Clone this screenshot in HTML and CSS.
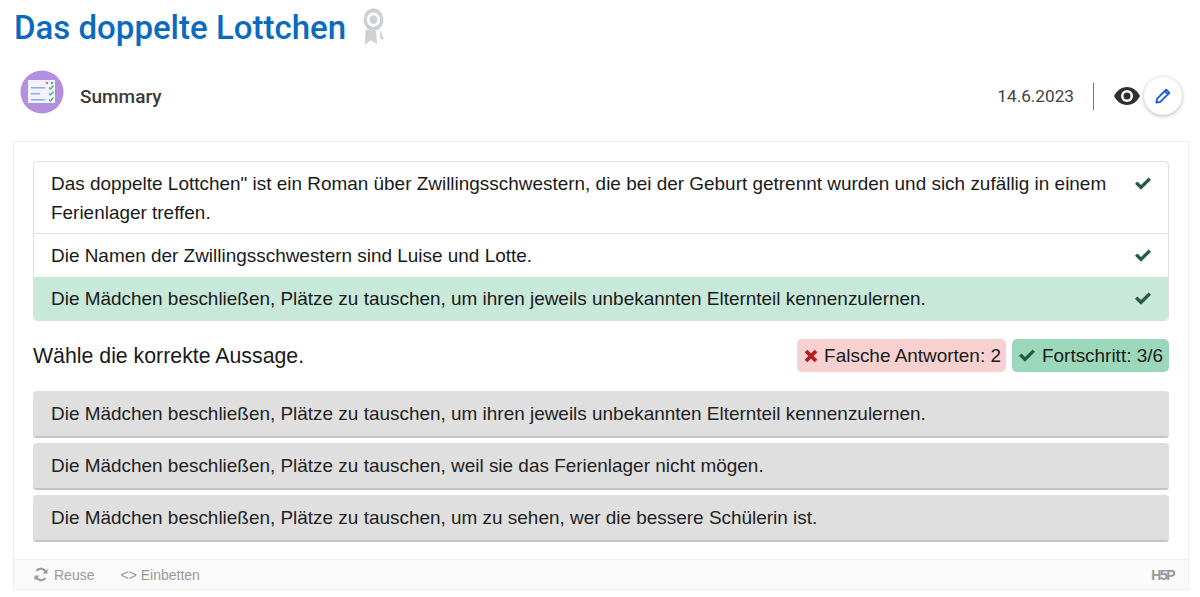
FILE: index.html
```html
<!DOCTYPE html>
<html lang="en">
<head>
    <meta charset="UTF-8">
    <meta name="viewport" content="width=device-width, initial-scale=1.0">
    <title>Das doppelte Lottchen</title>
    <link rel="stylesheet" href="styles.css">
</head>
<body>
    <div class="page">
        <!-- Title -->
        <div class="title-row">
            <h1>Das doppelte Lottchen</h1>
            <svg class="medal" width="21" height="37" viewBox="0 0 24 38" preserveAspectRatio="none">
                <path fill="#cdd0d4" d="M3 22 L2 38 L9 33 L16 37 L15 24 Z"/>
                <path fill="#cdd0d4" d="M19 22 L24 32 L20 32 Z"/>
                <circle cx="12" cy="12" r="11.500" fill="#cdd0d4"/>
                <circle cx="12" cy="12" r="7.500" fill="#fff"/>
                <circle cx="12" cy="12" r="4.500" fill="#cdd0d4"/>
            </svg>
        </div>

        <!-- Type and meta row -->
        <div class="meta-row">
            <svg class="type-icon" width="44" height="44" viewBox="0 0 44 44">
                <circle cx="22" cy="22" r="21.500" fill="#b38fe0"/>
                <rect x="8" y="10" width="27" height="23" fill="#f3f1fa"/>
                <circle cx="27" cy="13" r="1.300" fill="#e8766f"/>
                <circle cx="32" cy="13" r="1.300" fill="#4cb878"/>
                <rect x="11" y="17" width="14" height="1.500" fill="#7fb1ea"/>
                <rect x="11" y="23" width="9" height="1.500" fill="#7fb1ea"/>
                <rect x="11" y="29" width="14" height="1.500" fill="#7fb1ea"/>
                <path d="M29 17.500 L30.500 19 L33.500 15.500 M29 23.500 L30.500 25 L33.500 21.500 M29 29.500 L30.500 31 L33.500 27.500" fill="none" stroke="#4cb878" stroke-width="1.300"/>
            </svg>
            <span class="type-name">Summary</span>
            <span class="date">14.6.2023</span>
            <span class="divider"></span>
            <svg class="eye" width="26" height="18" viewBox="0 0 26 18">
                <path fill="#2f2f2f" d="M13 0 C7 0 2.500 4 0 9 C2.500 14 7 18 13 18 C19 18 23.500 14 26 9 C23.500 4 19 0 13 0 Z"/>
                <circle cx="13" cy="9" r="6" fill="#fff"/>
                <circle cx="13" cy="9" r="3.500" fill="#2f2f2f"/>
            </svg>
            <button class="edit-btn">
                <svg width="16" height="16" viewBox="0 0 15 15">
                    <path d="M10.500 1.500 L13.500 4.500 L5 13 L1.300 13.700 L2 10 Z M9 3 L12 6" fill="none" stroke="#1a56e8" stroke-width="1.700" stroke-linejoin="round"/>
                </svg>
            </button>
        </div>

        <!-- H5P panel -->
        <div class="panel">
            <div class="panel-body">
                <ul class="summary-list">
                    <li class="first">
                        <span>Das doppelte Lottchen" ist ein Roman über Zwillingsschwestern, die bei der Geburt getrennt wurden und sich zufällig in einem Ferienlager treffen.</span>
                        <svg class="check" width="16" height="13" viewBox="0 0 16 13"><path d="M0 6.800 L2.400 4.400 L6 8 L13.600 .4 L16 2.800 L6 12.800 Z" fill="#255c41"/></svg>
                    </li>
                    <li>
                        <span>Die Namen der Zwillingsschwestern sind Luise und Lotte.</span>
                        <svg class="check" width="16" height="13" viewBox="0 0 16 13"><path d="M0 6.800 L2.400 4.400 L6 8 L13.600 .4 L16 2.800 L6 12.800 Z" fill="#255c41"/></svg>
                    </li>
                    <li class="current">
                        <span>Die Mädchen beschließen, Plätze zu tauschen, um ihren jeweils unbekannten Elternteil kennenzulernen.</span>
                        <svg class="check" width="16" height="13" viewBox="0 0 16 13"><path d="M0 6.800 L2.400 4.400 L6 8 L13.600 .4 L16 2.800 L6 12.800 Z" fill="#255c41"/></svg>
                    </li>
                </ul>

                <div class="status-row">
                    <div class="prompt">Wähle die korrekte Aussage.</div>
                    <div class="badge badge-wrong">
                        <svg width="14" height="14" viewBox="0 0 14 14"><path d="M2 2 L12 12 M12 2 L2 12" fill="none" stroke="#b71c1c" stroke-width="3.800"/></svg>
                        Falsche Antworten: 2
                    </div>
                    <div class="badge badge-progress">
                        <svg width="16" height="13" viewBox="0 0 16 13"><path d="M0 6.800 L2.400 4.400 L6 8 L13.600 .4 L16 2.800 L6 12.800 Z" fill="#255c41"/></svg>
                        Fortschritt: 3/6
                    </div>
                </div>

                <div class="option">Die Mädchen beschließen, Plätze zu tauschen, um ihren jeweils unbekannten Elternteil kennenzulernen.</div>
                <div class="option">Die Mädchen beschließen, Plätze zu tauschen, weil sie das Ferienlager nicht mögen.</div>
                <div class="option">Die Mädchen beschließen, Plätze zu tauschen, um zu sehen, wer die bessere Schülerin ist.</div>
            </div>

            <div class="panel-footer">
                <span class="foot-link">
                    <svg width="16" height="15" viewBox="0 0 15 15">
                        <path d="M12.500 5.500 A5.500 5.500 0 0 0 3 3.800 M2.500 9.500 A5.500 5.500 0 0 0 12 11.200" fill="none" stroke="#999" stroke-width="2"/>
                        <path d="M14 1.500 V6.500 H9 Z M1 13.500 V8.500 H6 Z" fill="#999"/>
                    </svg>
                    Reuse
                </span>
                <span class="foot-link foot-embed">&lt;&gt; Einbetten</span>
                <span class="h5p-logo">H5P</span>
            </div>
        </div>
    </div>
</body>
</html>
```

FILE: styles.css
```css
body { margin: 0; font-family: "Liberation Sans", Arial, sans-serif; background: #fff; color: #1a1a1a; }
.page { padding: 0 11px 0 13px; }

.title-row { display: flex; align-items: flex-start; height: 70px; padding-left: 1px; }
h1 { margin: 7px 0 0; font-family: Roboto, sans-serif; font-weight: 500; font-size: 33px; line-height: 42px; color: #0a6abf; }
.medal { margin: 8px 0 0 17px; }

.meta-row { display: flex; align-items: center; height: 52px; padding: 0 7px 0 7px; }
.type-icon { flex: none; align-self: flex-start; }
.type-name { margin-left: 16px; font-family: Roboto, sans-serif; font-weight: 500; font-size: 19px; color: #3a3a3a; }
.date { margin-left: auto; font-family: Roboto, sans-serif; font-size: 17.200px; color: #444; }
.divider { width: 1px; height: 27px; margin: 0 20px 0 19px; background: #777; }
.eye { flex: none; }
.edit-btn { display: flex; align-items: center; justify-content: center; width: 38px; height: 38px; margin-left: 4px; padding: 0; border: 0; border-radius: 50%; background: #fff; box-shadow: 0 1px 4px rgba(0, 0, 0, .3); }

.panel { margin-top: 19px; border: 1px solid #eee; }
.panel-body { padding: 19px 19px 17px; }

.summary-list { margin: 0; padding: 0; list-style: none; border: 1px solid #dedede; border-radius: 4px; overflow: hidden; }
.summary-list li { display: flex; align-items: flex-start; justify-content: space-between; padding: 7px 17px 7px 17px; font-size: 18.950px; line-height: 29px; }
.summary-list li.first { padding: 6.500px 17px; border-bottom: 1px solid #dedede; }
.summary-list li span { width: 1065px; }
.summary-list li .check { flex: none; margin-top: 8px; }
.summary-list li.current { background: #c8e8d9; }

.status-row { display: flex; align-items: center; gap: 6px; margin: 18px 0 19px; }
.prompt { margin-right: auto; padding-top: 1px; font-size: 21.300px; }
.badge { display: flex; align-items: center; gap: 6px; height: 33px; padding: 0 5px 0 7px; border-radius: 5px; font-size: 18.950px; }
.badge-wrong { background: #f7d0d0; }
.badge-progress { gap: 7px; padding-right: 6px; background: #9bd8bb; }

.option { margin-top: 5px; padding: 0 18px; height: 45px; line-height: 45px; background: #dfdfdf; border-bottom: 2px solid #c4c4c4; border-radius: 4px; font-size: 18.950px; color: #222; }
.status-row + .option { margin-top: 0; }

.panel-footer { display: flex; align-items: center; height: 29px; padding: 0 14px 0 19px; background: #fafafa; border-top: 1px solid #eee; font-size: 14px; color: #999; }
.foot-link { display: flex; align-items: center; gap: 5px; }
.foot-embed { margin-left: 26px; }
.h5p-logo { margin-left: auto; font-weight: bold; font-size: 14px; letter-spacing: -1.500px; color: #999; }
```
